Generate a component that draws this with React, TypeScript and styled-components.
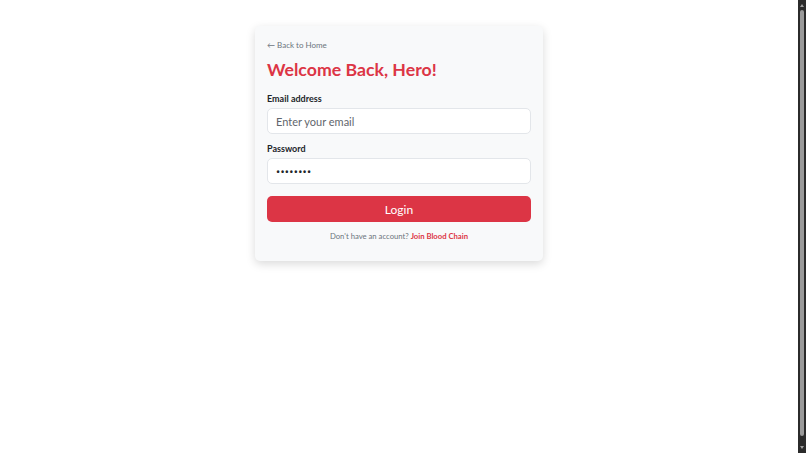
import { createGlobalStyle, styled } from 'styled-components'

const GlobalStyle = createGlobalStyle`
  html, body {
    margin: 0;
    padding: 0;
    background: #ffffff;
    font-family: Lato, "Noto Sans", sans-serif;
    color: #212529;
  }
  * {
    box-sizing: border-box;
  }
`

const Page = styled.main`
  display: flex;
  justify-content: center;
  align-items: flex-start;
  padding: 26px 8px 0 0;
  min-height: 453px;
`

/* window scrollbar as seen in the screenshot */
const ScrollTrack = styled.div`
  position: fixed;
  top: 0;
  right: 0;
  width: 8px;
  height: 100vh;
  background: #2b2b2b;
  display: flex;
  flex-direction: column;
  align-items: center;
  padding: 4px 0;
  gap: 3px;
`

const ScrollArrow = styled.div`
  width: 0;
  height: 0;
  border-left: 2.5px solid transparent;
  border-right: 2.5px solid transparent;
  ${(p: { $down?: boolean }) =>
    p.$down ? 'border-top: 3px solid #a0a0a0;' : 'border-bottom: 3px solid #a0a0a0;'}
`

const ScrollThumb = styled.div`
  flex: 1;
  width: 4px;
  border-radius: 2px;
  background: #9a9a9a;
  margin-bottom: 7px;
`

const Card = styled.div`
  width: 288px;
  background: #f8f9fa;
  border-radius: 5px;
  box-shadow: 0 3px 10px rgba(0, 0, 0, 0.15);
  padding: 12px 12px 19px 12px;
  display: flex;
  flex-direction: column;
`

const BackLink = styled.a`
  font-size: 8px;
  color: #6c757d;
  text-decoration: none;
  margin-top: 1px;
  line-height: 12px;
`

const Title = styled.h1`
  margin: 7px 0 0 0;
  font-size: 17.7px;
  font-weight: 700;
  color: #dc3545;
  line-height: 24px;
`

const Field = styled.div`
  display: flex;
  flex-direction: column;
  margin-top: ${(p: { $first?: boolean }) => (p.$first ? '11px' : '9px')};
`

const Label = styled.label`
  font-size: 9px;
  font-weight: 700;
  color: #212529;
  line-height: 12px;
  margin-bottom: 3px;
`

const Input = styled.input`
  width: 100%;
  height: 26px;
  border: 1px solid #e3e6ea;
  border-radius: 5px;
  background: #ffffff;
  padding: 0 8px;
  font-family: inherit;
  font-size: 11px;
  color: #212529;
  outline: none;

  &::placeholder {
    color: #5f666d;
  }

  &[type='password'] {
    font-family: "Noto Sans", sans-serif;
    font-size: 11px;
    letter-spacing: 0.3px;
  }
`

const LoginButton = styled.button`
  margin-top: 12px;
  height: 26px;
  width: 100%;
  border: none;
  border-radius: 5px;
  background: #dc3545;
  color: #ffffff;
  font-family: inherit;
  font-size: 12px;
  cursor: pointer;
`

const Footer = styled.p`
  margin: 8px 0 0 0;
  text-align: center;
  font-size: 7.7px;
  color: #6c757d;
  line-height: 12px;
`

const JoinLink = styled.a`
  color: #dc3545;
  font-weight: 700;
  text-decoration: none;
`

function App() {
  return (
    <>
      <GlobalStyle />
      <Page>
        <Card>
          <BackLink href="#">← Back to Home</BackLink>
          <Title>Welcome Back, Hero!</Title>
          <Field $first>
            <Label>Email address</Label>
            <Input type="email" placeholder="Enter your email" />
          </Field>
          <Field>
            <Label>Password</Label>
            <Input type="password" defaultValue="password" />
          </Field>
          <LoginButton>Login</LoginButton>
          <Footer>
            Don't have an account? <JoinLink href="#">Join Blood Chain</JoinLink>
          </Footer>
        </Card>
      </Page>
      <ScrollTrack>
        <ScrollArrow />
        <ScrollThumb />
        <ScrollArrow $down />
      </ScrollTrack>
    </>
  )
}

export default App
